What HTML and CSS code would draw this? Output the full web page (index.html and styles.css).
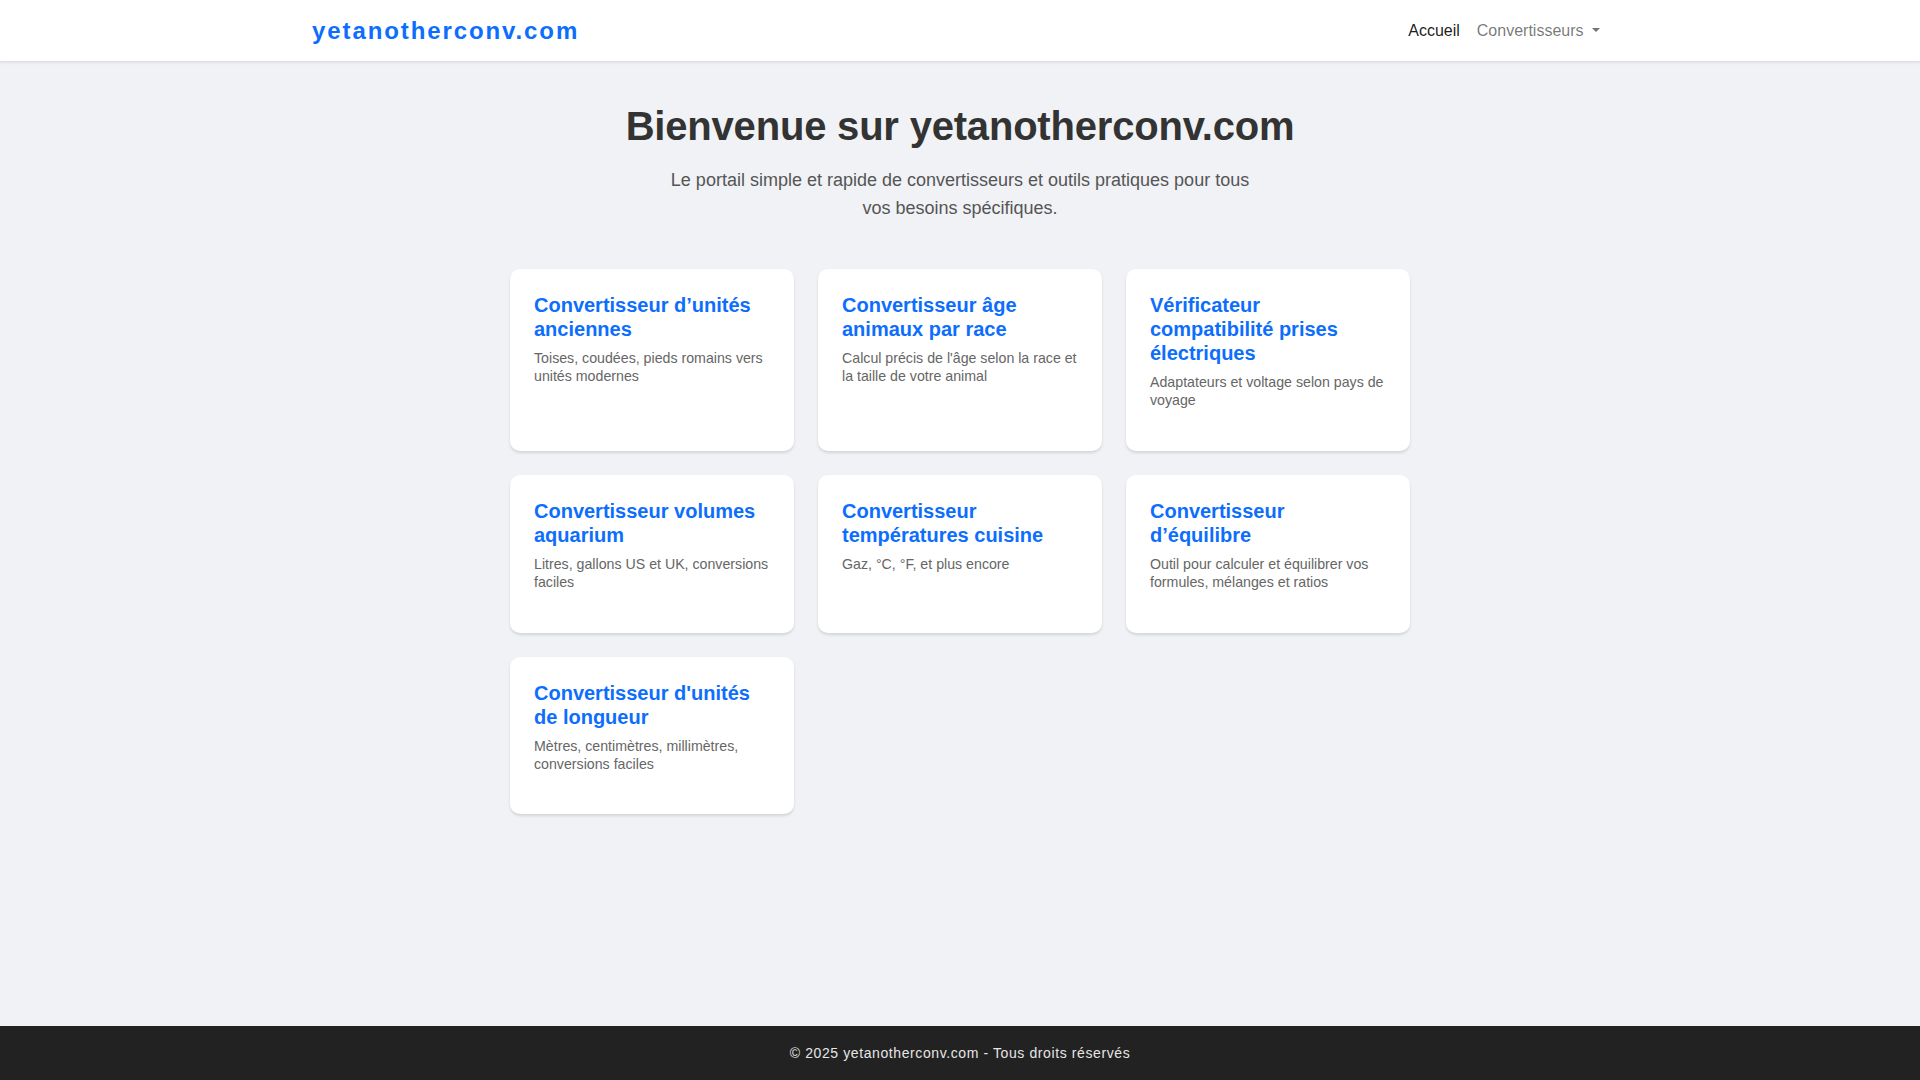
FILE: index.html
```html
<!DOCTYPE html>
<html lang="fr">
<head>
<meta charset="utf-8">
<title>yetanotherconv.com</title>
<link rel="stylesheet" href="styles.css">
</head>
<body>
<header class="site-header">
  <div class="header-inner">
    <a class="brand" href="#">yetanotherconv.com</a>
    <nav class="nav">
      <a class="nav-link active" href="#">Accueil</a>
      <a class="nav-link dropdown-toggle" href="#">Convertisseurs</a>
    </nav>
  </div>
</header>
<main class="main">
  <h1 class="title">Bienvenue sur yetanotherconv.com</h1>
  <p class="lead">Le portail simple et rapide de convertisseurs et outils pratiques pour tous vos besoins spécifiques.</p>
  <div class="grid">
    <a class="card" href="#">
      <h5 class="card-title">Convertisseur d’unités anciennes</h5>
      <p class="card-text">Toises, coudées, pieds romains vers unités modernes</p>
    </a>
    <a class="card" href="#">
      <h5 class="card-title">Convertisseur âge animaux par race</h5>
      <p class="card-text">Calcul précis de l'âge selon la race et la taille de votre animal</p>
    </a>
    <a class="card" href="#">
      <h5 class="card-title">Vérificateur compatibilité prises électriques</h5>
      <p class="card-text">Adaptateurs et voltage selon pays de voyage</p>
    </a>
    <a class="card" href="#">
      <h5 class="card-title">Convertisseur volumes aquarium</h5>
      <p class="card-text">Litres, gallons US et UK, conversions faciles</p>
    </a>
    <a class="card" href="#">
      <h5 class="card-title">Convertisseur températures cuisine</h5>
      <p class="card-text">Gaz, °C, °F, et plus encore</p>
    </a>
    <a class="card" href="#">
      <h5 class="card-title">Convertisseur d’équilibre</h5>
      <p class="card-text">Outil pour calculer et équilibrer vos formules, mélanges et ratios</p>
    </a>
    <a class="card" href="#">
      <h5 class="card-title">Convertisseur d'unités de longueur</h5>
      <p class="card-text">Mètres, centimètres, millimètres, conversions faciles</p>
    </a>
  </div>
</main>
<footer class="site-footer">© 2025 yetanotherconv.com - Tous droits réservés</footer>
</body>
</html>
```

FILE: styles.css
```css
* { box-sizing: border-box; }
html, body { margin: 0; padding: 0; }
body {
  font-family: "Liberation Sans", Arial, Helvetica, sans-serif;
  font-size: 16px;
  line-height: 1.5;
  color: #212529;
  background: #f0f2f5;
  min-height: 100vh;
  display: flex;
  flex-direction: column;
}
a { text-decoration: none; }

.site-header {
  background: #fff;
  border-bottom: 1px solid #dcdde2;
  box-shadow: 0 1px 3px rgba(0, 0, 0, 0.06);
}
.header-inner {
  max-width: 1320px;
  margin: 0 auto;
  padding: 13px 12px 12px;
  display: flex;
  align-items: center;
  justify-content: space-between;
}
.brand {
  font-size: 24px;
  line-height: 36px;
  font-weight: 700;
  letter-spacing: 1.9px;
  color: #0d6efd;
}
.nav { display: flex; align-items: center; }
.nav-link {
  padding: 6px 8.5px;
  font-size: 16px;
  line-height: 24px;
  color: rgba(0, 0, 0, 0.55);
}
.nav-link.active { color: rgba(0, 0, 0, 0.9); }
.dropdown-toggle::after {
  content: "";
  display: inline-block;
  margin-left: 8px;
  vertical-align: 0.255em;
  border-top: 0.3em solid;
  border-right: 0.3em solid transparent;
  border-left: 0.3em solid transparent;
  border-bottom: 0;
}

.main {
  flex: 1;
  padding: 40px 12px 48px;
  display: flex;
  flex-direction: column;
  align-items: center;
}
.title {
  margin: 0 0 16px;
  font-size: 40px;
  line-height: 48px;
  font-weight: 700;
  letter-spacing: -0.2px;
  color: #333;
  text-align: center;
}
.lead {
  margin: 0 0 47px;
  max-width: 600px;
  font-size: 18px;
  line-height: 28px;
  color: #555;
  text-align: center;
}
.grid {
  width: 900px;
  display: grid;
  grid-template-columns: repeat(3, 1fr);
  gap: 24px;
}
.card {
  display: block;
  background: #fff;
  border-radius: 10px;
  padding: 24px;
  box-shadow: 0 2px 3px rgba(0, 0, 0, 0.12);
}
.card-title {
  margin: 0 0 8px;
  font-size: 20px;
  line-height: 24px;
  font-weight: 700;
  color: #0d6efd;
}
.card-text {
  margin: 0 0 17px;
  font-size: 14.2px;
  line-height: 18.4px;
  color: #666;
}

.site-footer {
  background: #222;
  color: #e6e6e6;
  text-align: center;
  font-size: 14px;
  letter-spacing: 0.6px;
  line-height: 22px;
  padding: 16px 0;
}
```
